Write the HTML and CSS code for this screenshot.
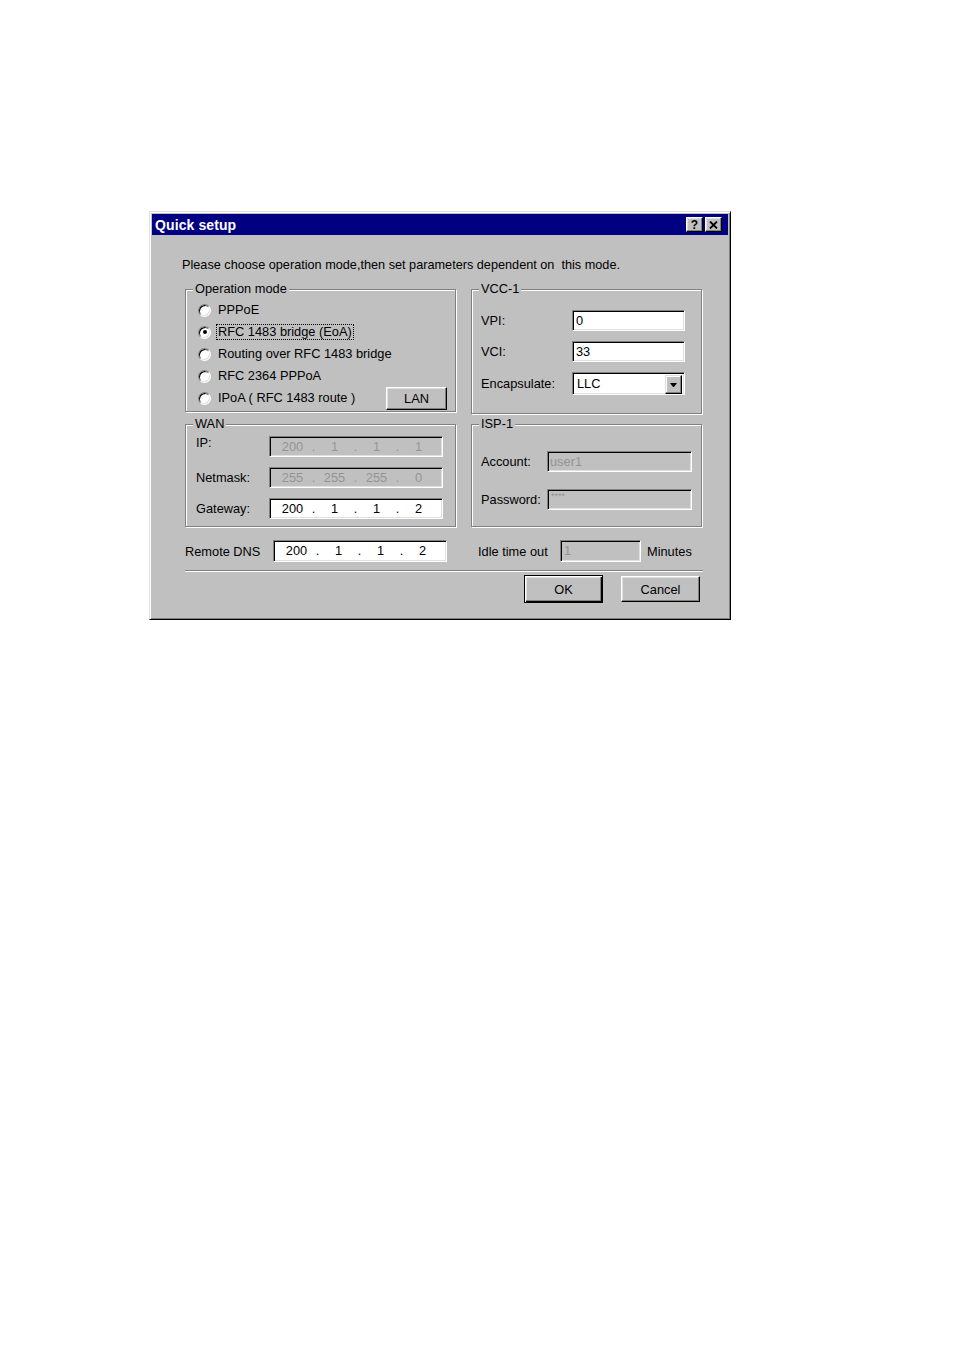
FILE: index.html
```html
<!DOCTYPE html>
<html>
<head>
<meta charset="utf-8">
<title>Quick setup</title>
<link rel="stylesheet" href="styles.css">
</head>
<body>
<div class="dialog">
  <div class="titlebar">
    <span class="title">Quick setup</span>
    <span class="tbtns">
      <span class="tbtn help">?</span>
      <span class="tbtn close"><svg width="9" height="8" viewBox="0 0 9 8"><path d="M1 0.5 L8 7.5 M8 0.5 L1 7.5" stroke="#000" stroke-width="1.8" fill="none"/></svg></span>
    </span>
  </div>
  <div class="body">
    <p class="intro">Please choose operation mode,then set parameters dependent on&nbsp; this mode.</p>

    <div class="row row1">
      <div class="group g-op">
        <span class="legend">Operation mode</span>
        <div class="radio-row"><span class="radio"></span><span class="rlabel">PPPoE</span></div>
        <div class="radio-row"><span class="radio checked"></span><span class="rlabel focus">RFC 1483 bridge (EoA)</span></div>
        <div class="radio-row"><span class="radio"></span><span class="rlabel">Routing over RFC 1483 bridge</span></div>
        <div class="radio-row"><span class="radio"></span><span class="rlabel">RFC 2364 PPPoA</span></div>
        <div class="radio-row"><span class="radio"></span><span class="rlabel">IPoA ( RFC 1483 route )</span><span class="btn lan">LAN</span></div>
      </div>
      <div class="group g-vcc">
        <span class="legend">VCC-1</span>
        <div class="frow"><span class="flabel vcc-label">VPI:</span><span class="field vcc-field">0</span></div>
        <div class="frow"><span class="flabel vcc-label">VCI:</span><span class="field vcc-field">33</span></div>
        <div class="frow"><span class="flabel vcc-label">Encapsulate:</span><span class="field select"><span class="val">LLC</span><span class="arrow"><span class="tri"></span></span></span></div>
      </div>
    </div>

    <div class="row row2">
      <div class="group g-wan">
        <span class="legend">WAN</span>
        <div class="frow"><span class="flabel wan-label top">IP:</span><span class="field ip disabled"><span class="seg">200</span><span class="dot">.</span><span class="seg">1</span><span class="dot">.</span><span class="seg">1</span><span class="dot">.</span><span class="seg">1</span></span></div>
        <div class="frow"><span class="flabel wan-label">Netmask:</span><span class="field ip disabled"><span class="seg">255</span><span class="dot">.</span><span class="seg">255</span><span class="dot">.</span><span class="seg">255</span><span class="dot">.</span><span class="seg">0</span></span></div>
        <div class="frow"><span class="flabel wan-label">Gateway:</span><span class="field ip"><span class="seg">200</span><span class="dot">.</span><span class="seg">1</span><span class="dot">.</span><span class="seg">1</span><span class="dot">.</span><span class="seg">2</span></span></div>
      </div>
      <div class="group g-isp">
        <span class="legend">ISP-1</span>
        <div class="frow"><span class="flabel isp-label">Account:</span><span class="field isp-field disabled">user1</span></div>
        <div class="frow"><span class="flabel isp-label">Password:</span><span class="field isp-field disabled pwd">****</span></div>
      </div>
    </div>

    <div class="row row3">
      <span class="dns-label">Remote DNS</span>
      <span class="field ip dns"><span class="seg">200</span><span class="dot">.</span><span class="seg">1</span><span class="dot">.</span><span class="seg">1</span><span class="dot">.</span><span class="seg">2</span></span>
      <span class="idle-label">Idle time out</span>
      <span class="field idle disabled">1</span>
      <span class="minutes">Minutes</span>
    </div>

    <div class="separator"></div>

    <div class="buttons">
      <span class="btn default">OK</span>
      <span class="btn cancel">Cancel</span>
    </div>
  </div>
</div>
</body>
</html>
```

FILE: styles.css
```css
body {
  margin: 0;
  background: #fff;
  font-family: "Liberation Sans", Arial, sans-serif;
  font-size: 12.8px;
  color: #000;
}

.dialog {
  margin: 211px 0 0 149px;
  width: 582px;
  height: 409px;
  box-sizing: border-box;
  background: #c0c0c0;
  border: 1px solid;
  border-color: #dfdfdf #000 #000 #dfdfdf;
  box-shadow: inset 1px 1px 0 #fff, inset -1px -1px 0 #808080;
  padding: 2px;
}

.titlebar {
  height: 21px;
  background: #000080;
  display: flex;
  align-items: center;
  justify-content: space-between;
  padding: 0 6px 0 3px;
}

.title {
  color: #fff;
  font-weight: bold;
  font-size: 14px;
  letter-spacing: 0.1px;
}

.tbtns {
  display: flex;
  gap: 2px;
}

.tbtn {
  width: 17px;
  height: 15px;
  box-sizing: border-box;
  background: #c0c0c0;
  border: 1px solid;
  border-color: #fff #000 #000 #fff;
  box-shadow: inset -1px -1px 0 #808080, inset 1px 1px 0 #dfdfdf;
  display: flex;
  align-items: center;
  justify-content: center;
}

.tbtn.help {
  font-weight: bold;
  font-size: 12px;
  line-height: 12px;
}

.body {
  padding-left: 33px;
}

.intro {
  margin: 22px 0 0 -3px;
  line-height: 16px;
  font-size: 12.7px;
}

.row {
  display: flex;
  align-items: flex-start;
  gap: 15px;
}

.row1 {
  margin-top: 16px;
}

.row2 {
  margin-top: 10px;
}

.group {
  position: relative;
  box-sizing: border-box;
  border: 1px solid #808080;
  box-shadow: 1px 1px 0 #fff, inset 1px 1px 0 #fff;
}

.legend {
  position: absolute;
  top: -9px;
  left: 7px;
  padding: 0 2px;
  line-height: 16px;
  background: #c0c0c0;
}

.g-op {
  width: 271px;
  height: 123px;
  padding: 9px 8px 0 12px;
}

.g-vcc {
  width: 231px;
  height: 125px;
  padding: 20px 0 0 9px;
}

.g-wan {
  width: 271px;
  height: 103px;
  padding: 11px 0 0 10px;
}

.g-isp {
  width: 231px;
  height: 103px;
  padding: 26px 0 0 9px;
}

.radio-row {
  height: 22px;
  display: flex;
  align-items: center;
}

.radio {
  width: 13px;
  height: 13px;
  box-sizing: border-box;
  border-radius: 50%;
  background: #fff;
  border: 1px solid;
  border-color: #808080 #fff #fff #808080;
  box-shadow: inset 1px 1px 0 #000, inset -1px -1px 0 #dfdfdf;
  display: flex;
  align-items: center;
  justify-content: center;
  flex: none;
}

.radio.checked::after {
  content: "";
  width: 4px;
  height: 4px;
  border-radius: 50%;
  background: #000;
}

.rlabel {
  margin-left: 5px;
  padding: 0 1px;
  border: 1px dotted transparent;
  line-height: 14px;
  white-space: nowrap;
}

.rlabel.focus {
  border-color: #000;
}

.btn {
  box-sizing: border-box;
  background: #c0c0c0;
  border: 1px solid;
  border-color: #fff #000 #000 #fff;
  box-shadow: inset -1px -1px 0 #808080, inset 1px 1px 0 #dfdfdf;
  display: flex;
  align-items: center;
  justify-content: center;
}

.lan {
  margin-left: auto;
  width: 61px;
  height: 23px;
}

.frow {
  display: flex;
  align-items: center;
}

.g-vcc .frow,
.g-wan .frow {
  margin-bottom: 10px;
}

.g-isp .frow {
  margin-bottom: 17px;
}

.flabel {
  white-space: nowrap;
  line-height: 16px;
}

.flabel.top {
  align-self: flex-start;
  margin-top: -1px;
}

.vcc-label {
  width: 91px;
}

.wan-label {
  width: 73px;
}

.isp-label {
  width: 66px;
}

.field {
  box-sizing: border-box;
  height: 21px;
  background: #fff;
  border: 1px solid;
  border-color: #808080 #fff #fff #808080;
  box-shadow: inset 1px 1px 0 #000, inset -1px -1px 0 #dfdfdf;
  padding-left: 3px;
  line-height: 19px;
  white-space: nowrap;
}

.field.disabled {
  background: #c0c0c0;
  color: #949494;
}

.vcc-field {
  width: 113px;
}

.select {
  width: 113px;
  height: 23px;
  display: flex;
  padding: 0;
  line-height: 21px;
}

.select .val {
  flex: 1;
  padding-left: 4px;
}

.select .arrow {
  width: 17px;
  height: 19px;
  margin: 2px 2px 0 0;
  box-sizing: border-box;
  background: #c0c0c0;
  border: 1px solid;
  border-color: #dfdfdf #000 #000 #dfdfdf;
  box-shadow: inset -1px -1px 0 #808080, inset 1px 1px 0 #fff;
  display: flex;
  align-items: center;
  justify-content: center;
}

.tri {
  width: 1px;
  height: 0;
  border-left: 3px solid transparent;
  border-right: 3px solid transparent;
  border-top: 4px solid #000;
}

.ip {
  width: 174px;
  display: flex;
  padding-left: 4px;
}

.seg {
  width: 37px;
  text-align: center;
}

.dot {
  width: 5px;
  text-align: center;
}

.isp-field {
  width: 145px;
  padding-left: 2px;
}

.pwd {
  font-size: 9px;
  line-height: 12px;
  padding-left: 3px;
}

.row3 {
  margin-top: 13px;
  gap: 0;
  align-items: center;
}

.row3 .field {
  height: 22px;
  line-height: 20px;
}

.dns-label {
  width: 88px;
  white-space: nowrap;
}

.dns {
  width: 174px;
}

.idle-label {
  margin-left: 31px;
  width: 82px;
  white-space: nowrap;
}

.idle {
  width: 81px;
}

.minutes {
  margin-left: 6px;
}

.separator {
  margin-top: 8px;
  width: 518px;
  border-top: 1px solid #808080;
  border-bottom: 1px solid #fff;
}

.buttons {
  margin-top: 3px;
  width: 515px;
  display: flex;
  justify-content: flex-end;
  align-items: flex-start;
  gap: 18px;
}

.buttons .btn {
  width: 79px;
}

.btn.default {
  height: 28px;
  border: 1px solid #000;
  box-shadow: inset 1px 1px 0 #fff, inset -1px -1px 0 #000, inset -2px -2px 0 #808080, inset 2px 2px 0 #dfdfdf;
}

.btn.cancel {
  height: 26px;
  margin-top: 1px;
}
```
